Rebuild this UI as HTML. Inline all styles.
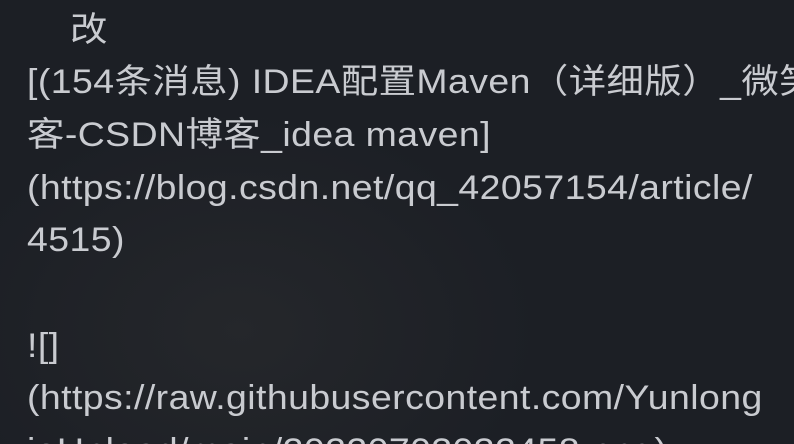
<!DOCTYPE html>
<html><head><meta charset="utf-8"><style>
html,body{margin:0;padding:0;width:794px;height:444px;overflow:hidden;background:#1c1f25;}
#w{position:relative;width:794px;height:444px;overflow:hidden;background:radial-gradient(ellipse 300px 220px at 240px 330px,#25272b 0%,#1c1f25 100%);}
.l{position:absolute;left:27px;white-space:nowrap;font-family:"Liberation Sans","Noto Sans CJK SC",sans-serif;font-size:34px;color:#c9cbd0;line-height:52px;height:52px;letter-spacing:0.4px;transform:scaleX(1.1);transform-origin:0 0;}
</style></head><body><div id="w">
<div class="l" style="top:4px;left:70px">改</div>
<div class="l" style="top:56px">[(154条消息) IDEA配置Maven（详细版）_微笑</div>
<div class="l" style="top:109px">客-CSDN博客_idea maven]</div>
<div class="l" style="top:162px">(https://blog.csdn.net/qq_42057154/article/</div>
<div class="l" style="top:214px">4515)</div>
<div class="l" style="top:320px">![]</div>
<div class="l" style="top:372px">(https://raw.githubusercontent.com/Yunlong</div>
<div class="l" style="top:425px">ioUpload/main/20220703032458.png)</div>
</div></body></html>
